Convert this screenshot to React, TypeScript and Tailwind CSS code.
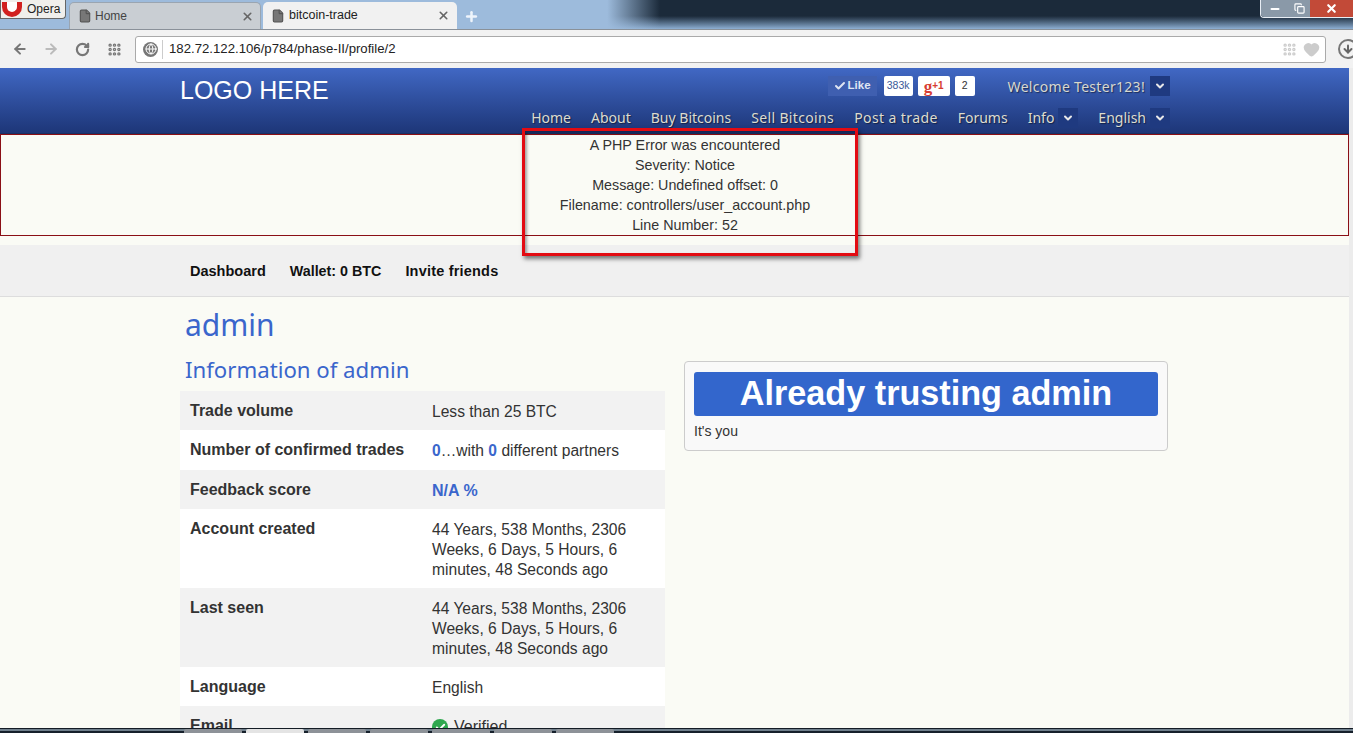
import React from "react";
import { ArrowLeft, ArrowRight, RotateCw, Grip, Heart, ChevronDown, Check, File, X, Plus, Minus, Copy, ArrowDown, Globe } from "lucide-react";

const ui = "font-['Liberation_Sans',Arial,sans-serif]";
const fancy = "font-['Noto_Sans','Lato',sans-serif]";

function Drop() {
  return (
    <span className="flex h-5 w-[20px] items-center justify-center bg-[#1f3a80]">
      <ChevronDown size={12} strokeWidth={4} className="text-[#e8e8e8]" />
    </span>
  );
}

function NavItem({ className, children }: { className?: string; children: React.ReactNode }) {
  return <span className={`pb-[2px] ${className ?? ""}`}>{children}</span>;
}

function Row({ label, shade, h, children }: { label: string; shade?: boolean; h: string; children: React.ReactNode }) {
  return (
    <div className={`flex ${h} pt-[10px] ${shade ? "bg-[#f2f2f2]" : "bg-white"}`}>
      <div className="w-[252px] pl-[10px] text-[16px] font-bold leading-[20px] text-[#333]">{label}</div>
      <div className="w-[225px] pt-[1px] text-[15.6px] leading-[20px] text-[#333]">{children}</div>
    </div>
  );
}

const age = "44 Years, 538 Months, 2306 Weeks, 6 Days, 5 Hours, 6 minutes, 48 Seconds ago";

function TaskButton({ light }: { light?: boolean }) {
  return <span className={`h-[4px] w-[58px] rounded-t-[2px] ${light ? "bg-[#e4e4e4]" : "bg-[#8d9298]"}`}></span>;
}

export default function App() {
  return (
    <div className={`relative flex h-[733px] w-[1353px] flex-col overflow-hidden bg-[#fafbf5] ${ui}`}>
      {/* window title bar */}
      <div className="relative flex h-[29px] shrink-0 items-end bg-gradient-to-b from-[#1b2a3a] from-55% to-[#8fb0d4]">
        <div className="relative flex h-[29px] w-[660px] shrink-0 items-end bg-[linear-gradient(to_right,#9dbbdc_92%,transparent)]">
          <div className="absolute left-0 top-0 flex h-[19px] w-[66px] items-center overflow-hidden rounded-br-[4px] border border-t-0 border-[#666] bg-[#f0efec] pl-[1px]">
            <span className="mr-[5px] h-[15px] w-[20px] rounded-b-full border-[5px] border-t-0 border-[#d1201f] bg-white"></span>
            <span className="text-[12px] text-[#222]">Opera</span>
          </div>
          <div className="ml-[69px] flex h-[27px] w-[192px] items-center rounded-t-[5px] border border-b-0 border-[#9aa5b1] bg-[#c9ced3] pl-[8px] pr-[6px]">
            <File size={14} className="mr-[3px] text-[#555]" fill="#777" />
            <span className="flex-1 text-[12px] text-[#444]">Home</span>
            <X size={13} strokeWidth={3} className="text-[#666]" />
          </div>
          <div className="ml-[2px] flex h-[27px] w-[194px] items-center rounded-t-[5px] bg-[#f1f1f1] pl-[8px] pr-[7px]">
            <File size={14} className="mr-[4px] text-[#555]" fill="#777" />
            <span className="flex-1 text-[12.5px] text-[#222]">bitcoin-trade</span>
            <X size={13} strokeWidth={3} className="text-[#666]" />
          </div>
          <Plus size={15} strokeWidth={4} className="mb-[5px] ml-[7px] text-[#eef4fb]" />
        </div>
        <div className="absolute right-0 top-0 flex h-[18px] w-[93px] overflow-hidden rounded-bl-[4px] border-b border-l border-[#e8eef5]">
          <span className="flex w-[28px] items-center justify-center bg-[#8a99a8]"><Minus size={12} strokeWidth={4} className="text-white" /></span>
          <span className="flex w-[21px] items-center justify-center bg-[#8a99a8]"><Copy size={11} strokeWidth={2.5} className="text-white" /></span>
          <span className="flex flex-1 items-center justify-center bg-[#c24a38]"><X size={13} strokeWidth={4} className="text-white" /></span>
        </div>
      </div>

      {/* toolbar */}
      <div className="flex h-[39px] shrink-0 items-center overflow-hidden border-t border-[#8a9199] bg-[#f2f2f2] pl-[12px]">
        <ArrowLeft size={16} strokeWidth={3} className="shrink-0 text-[#777]" />
        <ArrowRight size={16} strokeWidth={3} className="ml-[15px] shrink-0 text-[#bbb]" />
        <RotateCw size={15} strokeWidth={3.5} className="ml-[16px] shrink-0 text-[#777]" />
        <Grip size={15} strokeWidth={3.5} className="ml-[17px] shrink-0 text-[#777]" />
        <div className="ml-[13px] flex h-[27px] w-[1191px] shrink-0 items-center rounded-[3px] border border-[#aaa] bg-white pl-[7px] pr-[5px]">
          <span className="flex h-[15px] w-[15px] items-center justify-center rounded-full bg-[#777]"><Globe size={12} strokeWidth={2} className="text-white" /></span>
          <span className="ml-[4px] mr-[6px] h-[19px] w-px bg-[#ccc]"></span>
          <span className="flex-1 text-[13.2px] text-[#222]">182.72.122.106/p784/phase-II/profile/2</span>
          <Grip size={15} strokeWidth={3.5} className="text-[#ccc]" />
          <Heart size={17} fill="#ccc" className="ml-[6px] text-[#ccc]" />
        </div>
        <span className="ml-[12px] flex h-[20px] w-[20px] shrink-0 items-center justify-center rounded-full border-2 border-[#777]">
          <ArrowDown size={12} strokeWidth={4} className="text-[#666]" />
        </span>
      </div>

      {/* site and its scrollbar */}
      <div className="flex min-h-0 flex-1">
        <div className="flex min-w-0 flex-1 flex-col">
          <div className="h-[66px] shrink-0 border-b border-[#1a2f63] bg-gradient-to-b from-[#4168c4] to-[#1d3678] pl-[180px] pr-[179px]">
            <div className="flex h-[36px] items-center">
              <span className="flex-1 pt-[9px] text-[25px] text-white">LOGO HERE</span>
              <span className="flex h-5 w-[49px] items-center justify-center gap-[2px] bg-[#3f5fb0] text-[11.5px] font-bold text-[#dfe5f2]"><Check size={12} strokeWidth={4} />Like</span>
              <span className="ml-[7px] flex h-5 w-[29px] items-center justify-center rounded-[2px] bg-white text-[10.5px] text-[#3b5998]">383k</span>
              <span className="ml-[5px] flex h-5 w-[32px] items-center justify-center rounded-[2px] bg-white font-['Liberation_Serif',serif] text-[17px] font-bold leading-none text-[#d73d32]">g<span className="font-['Liberation_Sans',sans-serif] text-[10px]">+1</span></span>
              <span className="ml-[5px] flex h-5 w-[20px] items-center justify-center rounded-[2px] bg-white text-[10.5px] text-[#333]">2</span>
              <span className={`ml-[33px] mr-[5px] text-[14px] tracking-[0.3px] text-[#d8d8cf] [text-shadow:1px_1px_1px_rgba(0,0,0,0.45)] ${fancy}`}>Welcome Tester123!</span>
              <Drop />
            </div>
            <nav className={`flex h-[28px] items-center justify-end text-[14px] text-[#dddccf] [text-shadow:1px_1px_1px_rgba(0,0,0,0.45)] ${fancy}`}>
              <NavItem>Home</NavItem>
              <NavItem className="ml-[20px]">About</NavItem>
              <NavItem className="ml-[20px]">Buy Bitcoins</NavItem>
              <NavItem className="ml-[20px] tracking-[0.35px]">Sell Bitcoins</NavItem>
              <NavItem className="ml-[20px] tracking-[0.4px]">Post a trade</NavItem>
              <NavItem className="ml-[20px]">Forums</NavItem>
              <NavItem className="ml-[20px] mr-[4px]">Info</NavItem>
              <Drop />
              <NavItem className="ml-[20px] mr-[4px]">English</NavItem>
              <Drop />
            </nav>
          </div>

          <div className="flex h-[102px] shrink-0 flex-col items-center border border-[#8a0f16] pl-[21px] text-[14.3px] leading-[20px] text-[#333]">
            <p>A PHP Error was encountered</p>
            <p>Severity: Notice</p>
            <p>Message: Undefined offset: 0</p>
            <p>Filename: controllers/user_account.php</p>
            <p>Line Number: 52</p>
          </div>

          <div className="mt-[9px] flex h-[52px] shrink-0 items-center border-b border-[#ddd] bg-[#f0f0f0] pl-[190px] pt-[2px] text-[14.5px] font-bold text-[#111]">
            <span>Dashboard</span>
            <span className="ml-[24px] text-[14.3px]">Wallet: 0 BTC</span>
            <span className="ml-[24px] tracking-[0.2px]">Invite friends</span>
          </div>

          <div className="flex min-h-0 flex-1 overflow-hidden pl-[180px]">
            <div className="w-[485px] shrink-0">
              <h1 className={`mt-[10px] pl-[5px] text-[30px] leading-[36px] text-[#3a66cc] ${fancy}`}>admin</h1>
              <h2 className={`mt-[14px] pl-[5px] text-[22.2px] leading-[26px] text-[#3a66cc] ${fancy}`}>Information of admin</h2>
              <div className="mt-[8px]">
                <Row label="Trade volume" shade h="h-[39px]"><span>Less than 25 BTC</span></Row>
                <Row label="Number of confirmed trades" h="h-[40px]"><b className="text-[#3a66cc]">0</b>…with <b className="text-[#3a66cc]">0</b> different partners</Row>
                <Row label="Feedback score" shade h="h-[39px]"><b className="text-[16px] text-[#3a66cc]">N/A %</b></Row>
                <Row label="Account created" h="h-[79px]">{age}</Row>
                <Row label="Last seen" shade h="h-[79px]">{age}</Row>
                <Row label="Language" h="h-[39px]">English</Row>
                <Row label="Email" shade h="h-[39px]">
                  <span className="flex items-center gap-[6px] text-[16px]">
                    <span className="flex h-4 w-4 items-center justify-center rounded-full bg-[#2fa84f]"><Check size={11} strokeWidth={4} className="text-white" /></span>
                    Verified
                  </span>
                </Row>
              </div>
            </div>
            <div className="ml-[19px] mt-[64px] h-[90px] w-[484px] shrink-0 rounded-[4px] border border-[#ccc] bg-[#f9f9f9] px-[9px] pt-[10px]">
              <div className="flex h-[44px] items-center justify-center rounded-[3px] bg-[#3366cc] pb-[1px] text-[34.2px] font-bold text-white">Already trusting admin</div>
              <p className="mt-[5px] text-[14px] leading-[20px] text-[#333]">It's you</p>
            </div>
          </div>
        </div>
        <div className="w-[4px] shrink-0 bg-[#ececec]"></div>
      </div>

      {/* taskbar */}
      <div className="relative flex h-[5px] shrink-0 items-end gap-[4px] border-t border-[#141c25] bg-[linear-gradient(to_bottom,#6f7f8c_50%,#16202b_50%)] pl-[184px]">
        <TaskButton />
        <TaskButton light />
        <TaskButton />
        <TaskButton />
        <TaskButton />
        <TaskButton />
        <TaskButton />
      </div>

      {/* annotation */}
      <div className="absolute left-[522px] top-[128px] h-[128px] w-[336px] border-[3px] border-[#e30b12] shadow-[2px_3px_4px_rgba(0,0,0,0.5),inset_2px_2px_3px_rgba(0,0,0,0.35)]"></div>
    </div>
  );
}
